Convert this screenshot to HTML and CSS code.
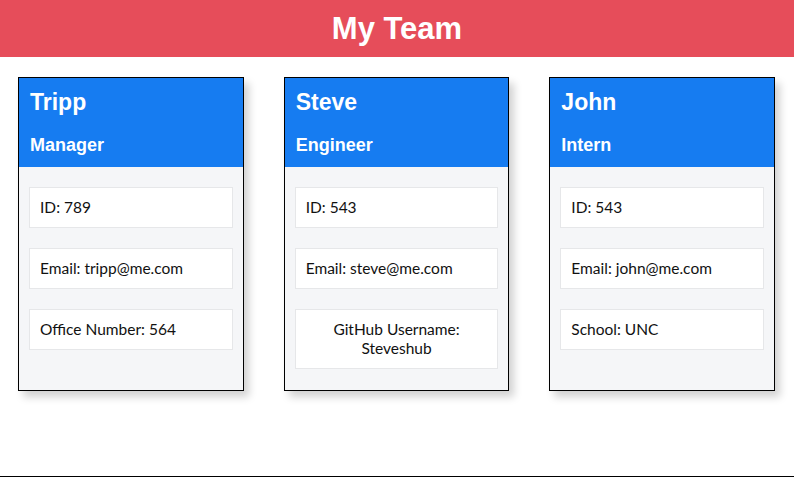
FILE: index.html
```html
<!DOCTYPE html>
<html lang="en">
<head>
<meta charset="utf-8">
<title>My Team</title>
<link rel="stylesheet" href="styles.css">
</head>
<body>
<div class="page">
  <header class="banner"><h1>My Team</h1></header>
  <main class="team">
    <section class="card">
      <div class="card-head"><h2>Tripp</h2><h3>Manager</h3></div>
      <ul class="card-body">
        <li>ID: 789</li>
        <li>Email: tripp@me.com</li>
        <li>Office Number: 564</li>
      </ul>
    </section>
    <section class="card">
      <div class="card-head"><h2>Steve</h2><h3>Engineer</h3></div>
      <ul class="card-body">
        <li>ID: 543</li>
        <li>Email: steve@me.com</li>
        <li class="center">GitHub Username:<br>Steveshub</li>
      </ul>
    </section>
    <section class="card">
      <div class="card-head"><h2>John</h2><h3>Intern</h3></div>
      <ul class="card-body">
        <li>ID: 543</li>
        <li>Email: john@me.com</li>
        <li>School: UNC</li>
      </ul>
    </section>
  </main>
</div>
</body>
</html>
```
FILE: styles.css
```css
* { box-sizing: border-box; }
html, body { margin: 0; padding: 0; background: #fff; }
body { font-family: "Lato", "Open Sans", sans-serif; color: #111; }
.page {
  height: 477px;
  border-bottom: 1px solid #000;
}
.banner {
  background: #e64d5a;
  height: 57px;
  display: flex;
  align-items: center;
  justify-content: center;
}
.banner h1 {
  margin: 0;
  color: #fff;
  font-family: "Liberation Sans", Arial, sans-serif;
  font-weight: bold;
  font-size: 31px;
}
.team {
  display: flex;
  gap: 40px;
  padding: 20px 19px 0 18px;
  align-items: stretch;
}
.card {
  width: 227px;
  border: 1px solid #000;
  background: #f5f6f8;
  box-shadow: 5px 6px 8px rgba(0,0,0,0.18);
  display: flex;
  flex-direction: column;
}
.card-head {
  background: #167cf1;
  color: #fff;
  font-family: "Liberation Sans", Arial, sans-serif;
  padding: 10px 11px 0;
  height: 89px;
}
.card-head h2 { margin: 0; font-size: 23px; font-weight: bold; line-height: 28px; }
.card-head h3 { margin: 18px 0 0; font-size: 18px; font-weight: bold; line-height: 22px; }
.card-body {
  list-style: none;
  margin: 0;
  padding: 20px 10px 21px;
  display: flex;
  flex-direction: column;
  gap: 20px;
}
.card-body li {
  background: #fff;
  border: 1px solid #e6e7e9;
  padding: 10px 10px;
  font-size: 15.5px;
  line-height: 19px;
}
.card-body li.center { text-align: center; }
```
